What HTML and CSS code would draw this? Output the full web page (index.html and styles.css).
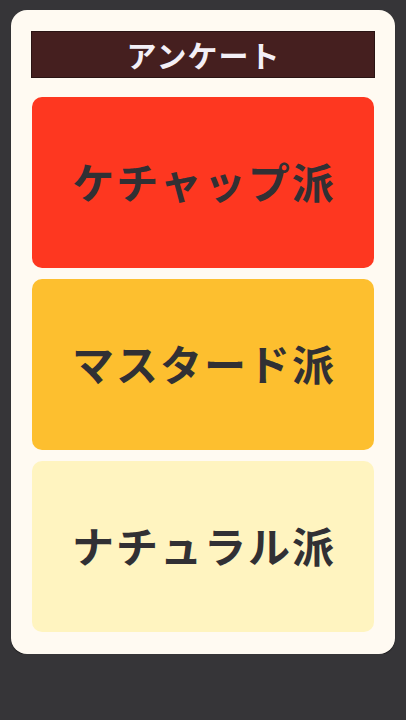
FILE: index.html
```html
<!DOCTYPE html>
<html lang="ja">
<head>
    <meta charset="UTF-8">
    <title>アンケート</title>
    <link rel="stylesheet" href="styles.css">
</head>
<body>
    <div class="card">
        <div class="header">アンケート</div>
        <div class="choices">
            <button class="choice ketchup">ケチャップ派</button>
            <button class="choice mustard">マスタード派</button>
            <button class="choice natural">ナチュラル派</button>
        </div>
    </div>
</body>
</html>
```

FILE: styles.css
```css
body {
    background-color: #363538;
    margin: 0;
    padding: 10px 11px 0;
    font-family: "Noto Sans CJK JP", "Noto Sans", sans-serif;
}

.card {
    background-color: #fffaf2;
    border-radius: 16px;
    padding: 21px 20px 22px;
    box-shadow: 0 1px 1px rgba(0, 0, 0, 0.5);
}

.header {
    background-color: #451f1f;
    border: 1px solid #2a1414;
    color: #f3eff6;
    height: 45px;
    line-height: 45px;
    text-align: center;
    font-size: 30px;
    font-weight: 700;
    letter-spacing: 1px;
    padding-left: 1px;
    margin-bottom: 19px;
}

.choices {
    display: flex;
    flex-direction: column;
    gap: 11px;
    padding: 0 1px;
}

.choice {
    height: 171px;
    border: none;
    border-radius: 10px;
    font-family: inherit;
    font-size: 42px;
    font-weight: 700;
    letter-spacing: 2px;
    color: #313034;
    padding: 0 0 4px 2px;
}

.ketchup {
    background-color: #fe3720;
}

.mustard {
    background-color: #fdbf2f;
}

.natural {
    background-color: #fff4c0;
}
```
